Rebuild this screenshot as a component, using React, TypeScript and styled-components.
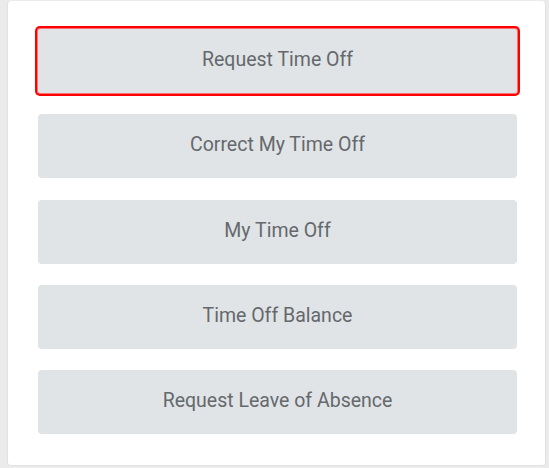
import React from "react";
import styled, { createGlobalStyle } from "styled-components";

const Global = createGlobalStyle`
  html, body { margin: 0; padding: 0; background: #ebebeb; }
  body { font-family: Roboto, "Noto Sans", sans-serif; }
`;

const Page = styled.div`
  width: 549px;
  height: 468px;
  padding: 1px 3px 2px 7px;
  box-sizing: border-box;
  display: flex;
`;

const Card = styled.div`
  flex: 1;
  background: #ffffff;
  border-radius: 4px;
  border: 1px solid #e2e2e2;
  border-top: none;
  box-sizing: border-box;
  padding: 28px 28px 30px 30px;
  display: flex;
  flex-direction: column;
  gap: 21.25px;
`;

const ActionButton = styled.button<{ $focused?: boolean }>`
  height: 64px;
  flex: none;
  width: 100%;
  border: none;
  background: #e0e4e7;
  color: #65686c;
  font-family: Roboto, "Noto Sans", sans-serif;
  font-size: 19.5px;
  display: flex;
  align-items: center;
  justify-content: center;
  padding: 0 0 3px;
  cursor: pointer;
  box-shadow: ${(p) =>
    p.$focused ? "0 0 0 1px #ff7070, 0 0 0 3px #ff0000" : "none"};
  border-radius: ${(p) => (p.$focused ? "2px" : "4px")};
`;

const items = [
  "Request Time Off",
  "Correct My Time Off",
  "My Time Off",
  "Time Off Balance",
  "Request Leave of Absence",
];

export default function App() {
  return (
    <>
      <Global />
      <Page>
        <Card>
          {items.map((t, i) => (
            <ActionButton key={t} $focused={i === 0}>
              {t}
            </ActionButton>
          ))}
        </Card>
      </Page>
    </>
  );
}
